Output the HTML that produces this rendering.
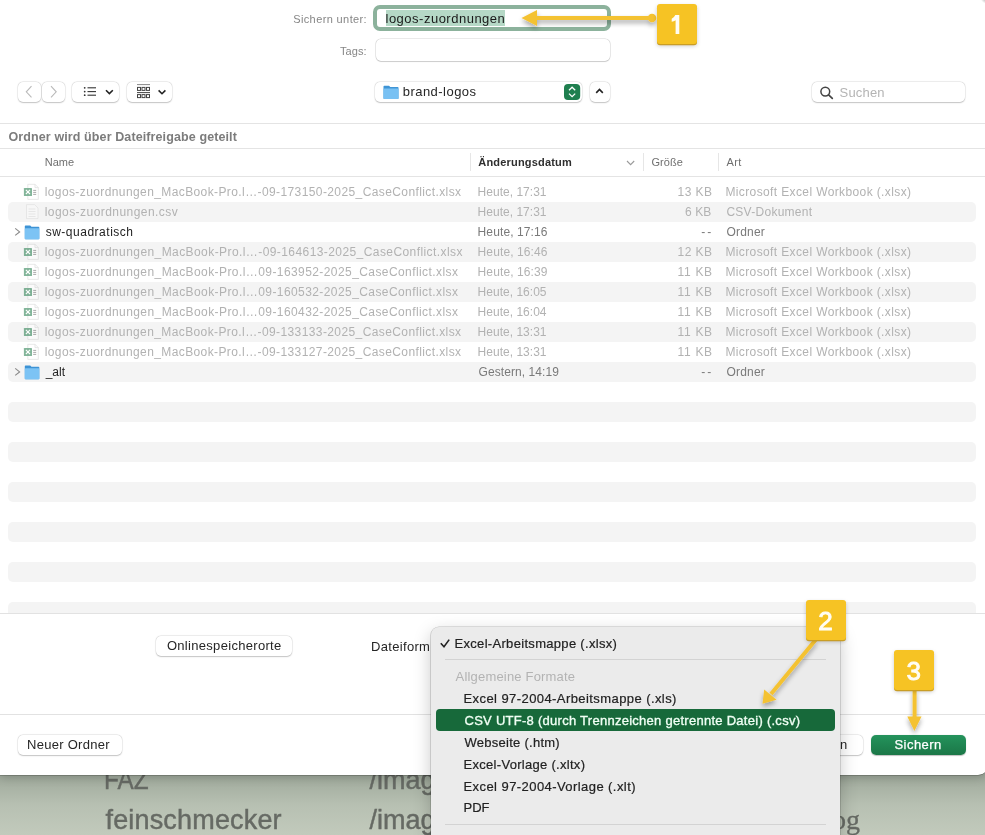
<!DOCTYPE html>
<html><head><meta charset="utf-8"><title>Sichern</title><style>
html,body{margin:0;padding:0;}
body{width:985px;height:835px;position:relative;overflow:hidden;background:#fff;font-family:"Liberation Sans",sans-serif;}
</style></head><body>
<div style='position:absolute;left:0;top:0;width:985px;height:835px;overflow:hidden;will-change:transform;'>
<div style='position:absolute;left:0px;top:760px;width:985.00px;height:75.00px;background:linear-gradient(#959f93 0px,#a3ad9f 20px,#b7c0b2 45px,#c2cabc 75px);'></div>
<div style='position:absolute;left:104.00px;top:767.00px;font-family:"Liberation Sans",sans-serif;font-size:27px;font-weight:400;line-height:27px;letter-spacing:0.000px;color:#666a64;white-space:nowrap;-webkit-text-stroke:0.45px #666a64;transform:scaleX(0.9);transform-origin:0 0;'>FAZ</div>
<div style='position:absolute;left:105.50px;top:807.00px;font-family:"Liberation Sans",sans-serif;font-size:27px;font-weight:400;line-height:27px;letter-spacing:0.167px;color:#666a64;white-space:nowrap;-webkit-text-stroke:0.45px #666a64;'>feinschmecker</div>
<div style='position:absolute;left:369.60px;top:767.00px;font-family:"Liberation Sans",sans-serif;font-size:27px;font-weight:400;line-height:27px;letter-spacing:0.000px;color:#666a64;white-space:nowrap;-webkit-text-stroke:0.45px #666a64;'>/imag</div>
<div style='position:absolute;left:369.60px;top:807.00px;font-family:"Liberation Sans",sans-serif;font-size:27px;font-weight:400;line-height:27px;letter-spacing:0.000px;color:#666a64;white-space:nowrap;-webkit-text-stroke:0.45px #666a64;'>/imag</div>
<div style='position:absolute;left:832.00px;top:806.00px;font-family:"Liberation Serif",sans-serif;font-size:28px;font-weight:400;line-height:28px;letter-spacing:0.000px;color:#666a64;white-space:nowrap;-webkit-text-stroke:0.3px #666a64;'>og</div>
<div style='position:absolute;left:0px;top:-20px;width:988.00px;height:795.00px;background:#fff;border-radius:0 0 10px 0;box-shadow:0 0.5px 0 rgba(0,0,0,0.35),0 3px 10px rgba(0,0,0,0.18);'></div>
<div style='position:absolute;left:979px;top:-6px;width:12px;height:9px;border-radius:50%;background:radial-gradient(circle at 70% 30%, rgba(120,120,120,0.9), rgba(180,180,180,0) 70%);'></div>
<div style='position:absolute;left:373.2px;top:5px;width:238.20px;height:25.50px;border:4px solid #8cb29c;border-radius:7px;box-sizing:border-box;background:#fff;'></div>
<div style='position:absolute;left:386px;top:10px;width:119.00px;height:15.50px;background:#b5d8c6;'></div>
<div style='position:absolute;left:375.7px;top:39px;width:234.00px;height:21.50px;background:#fff;border-radius:5px;box-shadow:0 0 0 0.6px rgba(0,0,0,0.14),0 0.8px 1px rgba(0,0,0,0.14);'></div>
<div style='position:absolute;left:17.6px;top:81.8px;width:23.40px;height:20.60px;background:#fff;border-radius:5px;box-shadow:0 0 0 0.5px rgba(0,0,0,0.09),0 0.6px 1.4px rgba(0,0,0,0.2);'></div>
<div style='position:absolute;left:42px;top:81.8px;width:22.80px;height:20.60px;background:#fff;border-radius:5px;box-shadow:0 0 0 0.5px rgba(0,0,0,0.09),0 0.6px 1.4px rgba(0,0,0,0.2);'></div>
<div style='position:absolute;left:72.4px;top:81.8px;width:46.40px;height:20.60px;background:#fff;border-radius:5px;box-shadow:0 0 0 0.5px rgba(0,0,0,0.09),0 0.6px 1.4px rgba(0,0,0,0.2);'></div>
<div style='position:absolute;left:126.7px;top:81.8px;width:45.70px;height:20.60px;background:#fff;border-radius:5px;box-shadow:0 0 0 0.5px rgba(0,0,0,0.09),0 0.6px 1.4px rgba(0,0,0,0.2);'></div>
<div style='position:absolute;left:374.7px;top:81.8px;width:206.90px;height:20.60px;background:#fff;border-radius:5px;box-shadow:0 0 0 0.5px rgba(0,0,0,0.09),0 0.6px 1.4px rgba(0,0,0,0.2);'></div>
<div style='position:absolute;left:589.8px;top:81.8px;width:20.60px;height:20.60px;background:#fff;border-radius:5px;box-shadow:0 0 0 0.5px rgba(0,0,0,0.09),0 0.6px 1.4px rgba(0,0,0,0.2);'></div>
<div style='position:absolute;left:812.4px;top:81.8px;width:153.00px;height:20.60px;background:#fff;border-radius:5px;box-shadow:0 0 0 0.5px rgba(0,0,0,0.09),0 0.6px 1.4px rgba(0,0,0,0.2);'></div>
<div style='position:absolute;left:0px;top:123.0px;width:985.00px;height:1.00px;background:#e4e4e4;'></div>
<div style='position:absolute;left:0px;top:148.0px;width:985.00px;height:1.00px;background:#e4e4e4;'></div>
<div style='position:absolute;left:0px;top:176.0px;width:985.00px;height:1.00px;background:#e4e4e4;'></div>
<div style='position:absolute;left:470px;top:153px;width:1.00px;height:18.30px;background:#e6e6e6;'></div>
<div style='position:absolute;left:643px;top:153px;width:1.00px;height:18.30px;background:#e6e6e6;'></div>
<div style='position:absolute;left:718px;top:153px;width:1.00px;height:18.30px;background:#e6e6e6;'></div>
<div style='position:absolute;left:8px;top:202px;width:968.00px;height:20.00px;background:#f4f4f4;border-radius:5px;'></div>
<div style='position:absolute;left:8px;top:242px;width:968.00px;height:20.00px;background:#f4f4f4;border-radius:5px;'></div>
<div style='position:absolute;left:8px;top:282px;width:968.00px;height:20.00px;background:#f4f4f4;border-radius:5px;'></div>
<div style='position:absolute;left:8px;top:322px;width:968.00px;height:20.00px;background:#f4f4f4;border-radius:5px;'></div>
<div style='position:absolute;left:8px;top:362px;width:968.00px;height:20.00px;background:#f4f4f4;border-radius:5px;'></div>
<div style='position:absolute;left:8px;top:402px;width:968.00px;height:20.00px;background:#f4f4f4;border-radius:5px;'></div>
<div style='position:absolute;left:8px;top:442px;width:968.00px;height:20.00px;background:#f4f4f4;border-radius:5px;'></div>
<div style='position:absolute;left:8px;top:482px;width:968.00px;height:20.00px;background:#f4f4f4;border-radius:5px;'></div>
<div style='position:absolute;left:8px;top:522px;width:968.00px;height:20.00px;background:#f4f4f4;border-radius:5px;'></div>
<div style='position:absolute;left:8px;top:562px;width:968.00px;height:20.00px;background:#f4f4f4;border-radius:5px;'></div>
<div style='position:absolute;left:8px;top:602px;width:968.00px;height:11.00px;background:#f4f4f4;border-radius:5px;border-bottom-left-radius:0;border-bottom-right-radius:0;'></div>
<div style='position:absolute;left:0px;top:613px;width:985.00px;height:1.00px;background:#e2e2e2;'></div>
<div style='position:absolute;left:0px;top:714px;width:985.00px;height:1.00px;background:#e2e2e2;'></div>
<div style='position:absolute;left:155.6px;top:635.9px;width:136.90px;height:20.10px;background:#fff;border-radius:5px;box-shadow:0 0 0 0.5px rgba(0,0,0,0.09),0 0.6px 1.4px rgba(0,0,0,0.2);'></div>
<div style='position:absolute;left:18px;top:734.9px;width:103.50px;height:20.30px;background:#fff;border-radius:5px;box-shadow:0 0 0 0.5px rgba(0,0,0,0.09),0 0.6px 1.4px rgba(0,0,0,0.2);'></div>
<div style='position:absolute;left:780px;top:734.8px;width:83.10px;height:20.50px;background:#fff;border-radius:5px;box-shadow:0 0 0 0.5px rgba(0,0,0,0.09),0 0.6px 1.4px rgba(0,0,0,0.2);'></div>
<div style='position:absolute;left:871.2px;top:734.8px;width:94.60px;height:19.80px;background:linear-gradient(#24935c,#1b7747);border-radius:5px;box-shadow:0 0.5px 1px rgba(0,0,0,0.25);'></div>
<svg style='position:absolute;left:0;top:0' width='985' height='835'>
 <path d='M31.5 86.2 L26.3 91.8 L31.5 97.4' fill='none' stroke='#b9b9b9' stroke-width='1.1'/>
 <path d='M51 86.2 L56.2 91.8 L51 97.4' fill='none' stroke='#b9b9b9' stroke-width='1.1'/>
 <g fill='#333'><circle cx='84.7' cy='87.8' r='0.9'/><circle cx='84.7' cy='91.6' r='0.9'/><circle cx='84.7' cy='95.2' r='0.9'/></g>
 <g stroke='#333' stroke-width='1.1'><line x1='87.5' y1='87.8' x2='96' y2='87.8'/><line x1='87.5' y1='91.6' x2='96' y2='91.6'/><line x1='87.5' y1='95.2' x2='96' y2='95.2'/></g>
 <path d='M106 90.3 L109.4 93.6 L112.8 90.3' fill='none' stroke='#222' stroke-width='1.6'/>
 <g stroke='#444' stroke-width='1'>
  <line x1='137' y1='84.6' x2='150' y2='84.6' stroke='#888'/>
  <line x1='137' y1='92.6' x2='150' y2='92.6'/>
  <rect x='137.5' y='87.4' width='3' height='3' fill='none'/><rect x='142' y='87.4' width='3' height='3' fill='none'/><rect x='146.5' y='87.4' width='3' height='3' fill='none'/>
  <rect x='137.5' y='94.6' width='3' height='3' fill='none'/><rect x='142' y='94.6' width='3' height='3' fill='none'/><rect x='146.5' y='94.6' width='3' height='3' fill='none'/>
 </g>
 <path d='M158.6 90.4 L162 93.7 L165.4 90.4' fill='none' stroke='#222' stroke-width='1.6'/>
 <path d='M383.5 86.5 Q383.5 85.7 384.3 85.7 L389 85.7 L390.3 87 L397.7 87 Q398.5 87 398.5 87.8 L398.5 98.3 Q398.5 99.1 397.7 99.1 L384.3 99.1 Q383.5 99.1 383.5 98.3 Z' fill='#3f95d6'/>
 <rect x='383.5' y='88.4' width='15' height='10.7' rx='0.8' fill='#79c1f3'/>
 <rect x='564' y='83.9' width='16.2' height='16.1' rx='4' fill='#1f7f4f'/>
 <path d='M569 90.3 L572.1 87.2 L575.2 90.3 M569 93.6 L572.1 96.7 L575.2 93.6' fill='none' stroke='#fff' stroke-width='1.3'/>
 <path d='M596.2 92.9 L599.5 89.5 L602.8 92.9' fill='none' stroke='#222' stroke-width='1.6'/>
 <circle cx='825.3' cy='91.6' r='4.4' fill='none' stroke='#444' stroke-width='1.5'/>
 <line x1='828.6' y1='94.9' x2='832.3' y2='98.4' stroke='#444' stroke-width='1.7' stroke-linecap='round'/>
</svg>
<svg style='position:absolute;left:0;top:0' width='985' height='835'><path d='M627 161 L630.6 164.6 L634.2 161' fill='none' stroke='#9a9a9a' stroke-width='1.1'/></svg>
<svg style='position:absolute;left:0;top:0' width='985' height='835'><g transform='translate(0,0)' opacity='0.55'>
 <path d='M27.8 184.3 L35 184.3 L38.3 187.6 L38.3 199.4 L27.8 199.4 Z' fill='#fff' stroke='#bbb' stroke-width='0.6'/>
 <path d='M35 184.3 L35 187.6 L38.3 187.6' fill='none' stroke='#bbb' stroke-width='0.6'/>
 <g stroke='#555' stroke-width='0.9'><line x1='33.2' y1='190.4' x2='36.2' y2='190.4'/><line x1='33.2' y1='192.4' x2='36.2' y2='192.4'/><line x1='33.2' y1='194.4' x2='36.2' y2='194.4'/></g>
 <rect x='23.9' y='187.9' width='8.1' height='8.1' rx='0.6' fill='#1f7a48'/>
 <path d='M25.9 189.9 L30 194 M30 189.9 L25.9 194' stroke='#fff' stroke-width='1.1'/>
</g><g transform='translate(0,20)' opacity='0.32'>
 <path d='M26.5 184.6 L34.6 184.6 L38 188 L38 198.6 L26.5 198.6 Z' fill='#fff' stroke='#aaa' stroke-width='0.6'/>
 <g stroke='#bbb' stroke-width='0.8'><line x1='28.5' y1='189' x2='35.5' y2='189'/><line x1='28.5' y1='191.5' x2='35.5' y2='191.5'/><line x1='28.5' y1='194' x2='35.5' y2='194'/><line x1='28.5' y1='196.5' x2='35.5' y2='196.5'/></g>
</g><g transform='translate(0,40)'>
 <path d='M15.2 188.4 L19.6 191.9 L15.2 195.4' fill='none' stroke='#8a8a8a' stroke-width='1.15'/>
 <path d='M24.8 186.3 Q24.8 185.5 25.6 185.5 L30.2 185.5 L31.5 186.8 L38.5 186.8 Q39.3 186.8 39.3 187.6 L39.3 198.4 Q39.3 199.2 38.5 199.2 L25.6 199.2 Q24.8 199.2 24.8 198.4 Z' fill='#3d93d5'/>
 <rect x='24.8' y='188.2' width='14.5' height='11' rx='0.8' fill='#7cc3f4'/>
</g><g transform='translate(0,60)' opacity='0.55'>
 <path d='M27.8 184.3 L35 184.3 L38.3 187.6 L38.3 199.4 L27.8 199.4 Z' fill='#fff' stroke='#bbb' stroke-width='0.6'/>
 <path d='M35 184.3 L35 187.6 L38.3 187.6' fill='none' stroke='#bbb' stroke-width='0.6'/>
 <g stroke='#555' stroke-width='0.9'><line x1='33.2' y1='190.4' x2='36.2' y2='190.4'/><line x1='33.2' y1='192.4' x2='36.2' y2='192.4'/><line x1='33.2' y1='194.4' x2='36.2' y2='194.4'/></g>
 <rect x='23.9' y='187.9' width='8.1' height='8.1' rx='0.6' fill='#1f7a48'/>
 <path d='M25.9 189.9 L30 194 M30 189.9 L25.9 194' stroke='#fff' stroke-width='1.1'/>
</g><g transform='translate(0,80)' opacity='0.55'>
 <path d='M27.8 184.3 L35 184.3 L38.3 187.6 L38.3 199.4 L27.8 199.4 Z' fill='#fff' stroke='#bbb' stroke-width='0.6'/>
 <path d='M35 184.3 L35 187.6 L38.3 187.6' fill='none' stroke='#bbb' stroke-width='0.6'/>
 <g stroke='#555' stroke-width='0.9'><line x1='33.2' y1='190.4' x2='36.2' y2='190.4'/><line x1='33.2' y1='192.4' x2='36.2' y2='192.4'/><line x1='33.2' y1='194.4' x2='36.2' y2='194.4'/></g>
 <rect x='23.9' y='187.9' width='8.1' height='8.1' rx='0.6' fill='#1f7a48'/>
 <path d='M25.9 189.9 L30 194 M30 189.9 L25.9 194' stroke='#fff' stroke-width='1.1'/>
</g><g transform='translate(0,100)' opacity='0.55'>
 <path d='M27.8 184.3 L35 184.3 L38.3 187.6 L38.3 199.4 L27.8 199.4 Z' fill='#fff' stroke='#bbb' stroke-width='0.6'/>
 <path d='M35 184.3 L35 187.6 L38.3 187.6' fill='none' stroke='#bbb' stroke-width='0.6'/>
 <g stroke='#555' stroke-width='0.9'><line x1='33.2' y1='190.4' x2='36.2' y2='190.4'/><line x1='33.2' y1='192.4' x2='36.2' y2='192.4'/><line x1='33.2' y1='194.4' x2='36.2' y2='194.4'/></g>
 <rect x='23.9' y='187.9' width='8.1' height='8.1' rx='0.6' fill='#1f7a48'/>
 <path d='M25.9 189.9 L30 194 M30 189.9 L25.9 194' stroke='#fff' stroke-width='1.1'/>
</g><g transform='translate(0,120)' opacity='0.55'>
 <path d='M27.8 184.3 L35 184.3 L38.3 187.6 L38.3 199.4 L27.8 199.4 Z' fill='#fff' stroke='#bbb' stroke-width='0.6'/>
 <path d='M35 184.3 L35 187.6 L38.3 187.6' fill='none' stroke='#bbb' stroke-width='0.6'/>
 <g stroke='#555' stroke-width='0.9'><line x1='33.2' y1='190.4' x2='36.2' y2='190.4'/><line x1='33.2' y1='192.4' x2='36.2' y2='192.4'/><line x1='33.2' y1='194.4' x2='36.2' y2='194.4'/></g>
 <rect x='23.9' y='187.9' width='8.1' height='8.1' rx='0.6' fill='#1f7a48'/>
 <path d='M25.9 189.9 L30 194 M30 189.9 L25.9 194' stroke='#fff' stroke-width='1.1'/>
</g><g transform='translate(0,140)' opacity='0.55'>
 <path d='M27.8 184.3 L35 184.3 L38.3 187.6 L38.3 199.4 L27.8 199.4 Z' fill='#fff' stroke='#bbb' stroke-width='0.6'/>
 <path d='M35 184.3 L35 187.6 L38.3 187.6' fill='none' stroke='#bbb' stroke-width='0.6'/>
 <g stroke='#555' stroke-width='0.9'><line x1='33.2' y1='190.4' x2='36.2' y2='190.4'/><line x1='33.2' y1='192.4' x2='36.2' y2='192.4'/><line x1='33.2' y1='194.4' x2='36.2' y2='194.4'/></g>
 <rect x='23.9' y='187.9' width='8.1' height='8.1' rx='0.6' fill='#1f7a48'/>
 <path d='M25.9 189.9 L30 194 M30 189.9 L25.9 194' stroke='#fff' stroke-width='1.1'/>
</g><g transform='translate(0,160)' opacity='0.55'>
 <path d='M27.8 184.3 L35 184.3 L38.3 187.6 L38.3 199.4 L27.8 199.4 Z' fill='#fff' stroke='#bbb' stroke-width='0.6'/>
 <path d='M35 184.3 L35 187.6 L38.3 187.6' fill='none' stroke='#bbb' stroke-width='0.6'/>
 <g stroke='#555' stroke-width='0.9'><line x1='33.2' y1='190.4' x2='36.2' y2='190.4'/><line x1='33.2' y1='192.4' x2='36.2' y2='192.4'/><line x1='33.2' y1='194.4' x2='36.2' y2='194.4'/></g>
 <rect x='23.9' y='187.9' width='8.1' height='8.1' rx='0.6' fill='#1f7a48'/>
 <path d='M25.9 189.9 L30 194 M30 189.9 L25.9 194' stroke='#fff' stroke-width='1.1'/>
</g><g transform='translate(0,180)'>
 <path d='M15.2 188.4 L19.6 191.9 L15.2 195.4' fill='none' stroke='#8a8a8a' stroke-width='1.15'/>
 <path d='M24.8 186.3 Q24.8 185.5 25.6 185.5 L30.2 185.5 L31.5 186.8 L38.5 186.8 Q39.3 186.8 39.3 187.6 L39.3 198.4 Q39.3 199.2 38.5 199.2 L25.6 199.2 Q24.8 199.2 24.8 198.4 Z' fill='#3d93d5'/>
 <rect x='24.8' y='188.2' width='14.5' height='11' rx='0.8' fill='#7cc3f4'/>
</g></svg>
<div style='position:absolute;left:293.20px;top:14.00px;font-family:"Liberation Sans",sans-serif;font-size:11px;font-weight:400;line-height:11px;letter-spacing:0.385px;color:#868686;white-space:nowrap;'>Sichern unter:</div>
<div style='position:absolute;left:385.50px;top:12.00px;font-family:"Liberation Sans",sans-serif;font-size:13px;font-weight:400;line-height:13px;letter-spacing:0.500px;color:#1a1a1a;white-space:nowrap;'>logos-zuordnungen</div>
<div style='position:absolute;left:339.90px;top:46.00px;font-family:"Liberation Sans",sans-serif;font-size:11px;font-weight:400;line-height:11px;letter-spacing:0.100px;color:#868686;white-space:nowrap;'>Tags:</div>
<div style='position:absolute;left:402.70px;top:85.00px;font-family:"Liberation Sans",sans-serif;font-size:13px;font-weight:400;line-height:13px;letter-spacing:0.470px;color:#262626;white-space:nowrap;'>brand-logos</div>
<div style='position:absolute;left:839.60px;top:86.00px;font-family:"Liberation Sans",sans-serif;font-size:13px;font-weight:400;line-height:13px;letter-spacing:0.180px;color:#b4b4b4;white-space:nowrap;'>Suchen</div>
<div style='position:absolute;left:8.50px;top:131.00px;font-family:"Liberation Sans",sans-serif;font-size:12.5px;font-weight:700;line-height:12.5px;letter-spacing:0.108px;color:#7c7c7c;white-space:nowrap;'>Ordner wird über Dateifreigabe geteilt</div>
<div style='position:absolute;left:44.70px;top:157.00px;font-family:"Liberation Sans",sans-serif;font-size:11px;font-weight:400;line-height:11px;letter-spacing:0.000px;color:#6f6f6f;white-space:nowrap;'>Name</div>
<div style='position:absolute;left:478.30px;top:157.00px;font-family:"Liberation Sans",sans-serif;font-size:11px;font-weight:700;line-height:11px;letter-spacing:0.185px;color:#2e2e2e;white-space:nowrap;'>Änderungsdatum</div>
<div style='position:absolute;left:651.40px;top:157.00px;font-family:"Liberation Sans",sans-serif;font-size:11px;font-weight:400;line-height:11px;letter-spacing:0.050px;color:#6f6f6f;white-space:nowrap;'>Größe</div>
<div style='position:absolute;left:726.40px;top:157.00px;font-family:"Liberation Sans",sans-serif;font-size:11px;font-weight:400;line-height:11px;letter-spacing:0.400px;color:#6f6f6f;white-space:nowrap;'>Art</div>
<div style='position:absolute;left:44.70px;top:186.00px;font-family:"Liberation Sans",sans-serif;font-size:12px;font-weight:400;line-height:12px;letter-spacing:0.398px;color:#b2b2b2;white-space:nowrap;'>logos-zuordnungen_MacBook-Pro.l…-09-173150-2025_CaseConflict.xlsx</div>
<div style='position:absolute;left:477.60px;top:186.00px;font-family:"Liberation Sans",sans-serif;font-size:12px;font-weight:400;line-height:12px;letter-spacing:0.018px;color:#b2b2b2;white-space:nowrap;'>Heute, 17:31</div>
<div style='position:absolute;left:677.60px;top:186.00px;font-family:"Liberation Sans",sans-serif;font-size:12px;font-weight:400;line-height:12px;letter-spacing:0.425px;color:#b2b2b2;white-space:nowrap;'>13 KB</div>
<div style='position:absolute;left:725.40px;top:186.00px;font-family:"Liberation Sans",sans-serif;font-size:12px;font-weight:400;line-height:12px;letter-spacing:0.381px;color:#b2b2b2;white-space:nowrap;'>Microsoft Excel Workbook (.xlsx)</div>
<div style='position:absolute;left:44.70px;top:206.00px;font-family:"Liberation Sans",sans-serif;font-size:12px;font-weight:400;line-height:12px;letter-spacing:0.450px;color:#b2b2b2;white-space:nowrap;'>logos-zuordnungen.csv</div>
<div style='position:absolute;left:477.60px;top:206.00px;font-family:"Liberation Sans",sans-serif;font-size:12px;font-weight:400;line-height:12px;letter-spacing:0.018px;color:#b2b2b2;white-space:nowrap;'>Heute, 17:31</div>
<div style='position:absolute;left:684.90px;top:206.00px;font-family:"Liberation Sans",sans-serif;font-size:12px;font-weight:400;line-height:12px;letter-spacing:0.133px;color:#b2b2b2;white-space:nowrap;'>6 KB</div>
<div style='position:absolute;left:726.40px;top:206.00px;font-family:"Liberation Sans",sans-serif;font-size:12px;font-weight:400;line-height:12px;letter-spacing:0.273px;color:#b2b2b2;white-space:nowrap;'>CSV-Dokument</div>
<div style='position:absolute;left:45.70px;top:226.00px;font-family:"Liberation Sans",sans-serif;font-size:12px;font-weight:400;line-height:12px;letter-spacing:0.508px;color:#232323;white-space:nowrap;'>sw-quadratisch</div>
<div style='position:absolute;left:477.60px;top:226.00px;font-family:"Liberation Sans",sans-serif;font-size:12px;font-weight:400;line-height:12px;letter-spacing:0.109px;color:#7a7a7a;white-space:nowrap;'>Heute, 17:16</div>
<div style='position:absolute;left:701.30px;top:226.00px;font-family:"Liberation Sans",sans-serif;font-size:12px;font-weight:400;line-height:12px;letter-spacing:2.000px;color:#7a7a7a;white-space:nowrap;'>--</div>
<div style='position:absolute;left:726.40px;top:226.00px;font-family:"Liberation Sans",sans-serif;font-size:12px;font-weight:400;line-height:12px;letter-spacing:0.220px;color:#7a7a7a;white-space:nowrap;'>Ordner</div>
<div style='position:absolute;left:44.70px;top:246.00px;font-family:"Liberation Sans",sans-serif;font-size:12px;font-weight:400;line-height:12px;letter-spacing:0.420px;color:#b2b2b2;white-space:nowrap;'>logos-zuordnungen_MacBook-Pro.l…-09-164613-2025_CaseConflict.xlsx</div>
<div style='position:absolute;left:477.60px;top:246.00px;font-family:"Liberation Sans",sans-serif;font-size:12px;font-weight:400;line-height:12px;letter-spacing:0.109px;color:#b2b2b2;white-space:nowrap;'>Heute, 16:46</div>
<div style='position:absolute;left:677.60px;top:246.00px;font-family:"Liberation Sans",sans-serif;font-size:12px;font-weight:400;line-height:12px;letter-spacing:0.425px;color:#b2b2b2;white-space:nowrap;'>12 KB</div>
<div style='position:absolute;left:725.40px;top:246.00px;font-family:"Liberation Sans",sans-serif;font-size:12px;font-weight:400;line-height:12px;letter-spacing:0.381px;color:#b2b2b2;white-space:nowrap;'>Microsoft Excel Workbook (.xlsx)</div>
<div style='position:absolute;left:44.70px;top:266.00px;font-family:"Liberation Sans",sans-serif;font-size:12px;font-weight:400;line-height:12px;letter-spacing:0.419px;color:#b2b2b2;white-space:nowrap;'>logos-zuordnungen_MacBook-Pro.l…09-163952-2025_CaseConflict.xlsx</div>
<div style='position:absolute;left:477.60px;top:266.00px;font-family:"Liberation Sans",sans-serif;font-size:12px;font-weight:400;line-height:12px;letter-spacing:0.109px;color:#b2b2b2;white-space:nowrap;'>Heute, 16:39</div>
<div style='position:absolute;left:677.60px;top:266.00px;font-family:"Liberation Sans",sans-serif;font-size:12px;font-weight:400;line-height:12px;letter-spacing:0.675px;color:#b2b2b2;white-space:nowrap;'>11 KB</div>
<div style='position:absolute;left:725.40px;top:266.00px;font-family:"Liberation Sans",sans-serif;font-size:12px;font-weight:400;line-height:12px;letter-spacing:0.381px;color:#b2b2b2;white-space:nowrap;'>Microsoft Excel Workbook (.xlsx)</div>
<div style='position:absolute;left:44.70px;top:286.00px;font-family:"Liberation Sans",sans-serif;font-size:12px;font-weight:400;line-height:12px;letter-spacing:0.419px;color:#b2b2b2;white-space:nowrap;'>logos-zuordnungen_MacBook-Pro.l…09-160532-2025_CaseConflict.xlsx</div>
<div style='position:absolute;left:477.60px;top:286.00px;font-family:"Liberation Sans",sans-serif;font-size:12px;font-weight:400;line-height:12px;letter-spacing:0.018px;color:#b2b2b2;white-space:nowrap;'>Heute, 16:05</div>
<div style='position:absolute;left:677.60px;top:286.00px;font-family:"Liberation Sans",sans-serif;font-size:12px;font-weight:400;line-height:12px;letter-spacing:0.675px;color:#b2b2b2;white-space:nowrap;'>11 KB</div>
<div style='position:absolute;left:725.40px;top:286.00px;font-family:"Liberation Sans",sans-serif;font-size:12px;font-weight:400;line-height:12px;letter-spacing:0.381px;color:#b2b2b2;white-space:nowrap;'>Microsoft Excel Workbook (.xlsx)</div>
<div style='position:absolute;left:44.70px;top:306.00px;font-family:"Liberation Sans",sans-serif;font-size:12px;font-weight:400;line-height:12px;letter-spacing:0.419px;color:#b2b2b2;white-space:nowrap;'>logos-zuordnungen_MacBook-Pro.l…09-160432-2025_CaseConflict.xlsx</div>
<div style='position:absolute;left:477.60px;top:306.00px;font-family:"Liberation Sans",sans-serif;font-size:12px;font-weight:400;line-height:12px;letter-spacing:0.018px;color:#b2b2b2;white-space:nowrap;'>Heute, 16:04</div>
<div style='position:absolute;left:677.60px;top:306.00px;font-family:"Liberation Sans",sans-serif;font-size:12px;font-weight:400;line-height:12px;letter-spacing:0.675px;color:#b2b2b2;white-space:nowrap;'>11 KB</div>
<div style='position:absolute;left:725.40px;top:306.00px;font-family:"Liberation Sans",sans-serif;font-size:12px;font-weight:400;line-height:12px;letter-spacing:0.381px;color:#b2b2b2;white-space:nowrap;'>Microsoft Excel Workbook (.xlsx)</div>
<div style='position:absolute;left:44.70px;top:326.00px;font-family:"Liberation Sans",sans-serif;font-size:12px;font-weight:400;line-height:12px;letter-spacing:0.398px;color:#b2b2b2;white-space:nowrap;'>logos-zuordnungen_MacBook-Pro.l…-09-133133-2025_CaseConflict.xlsx</div>
<div style='position:absolute;left:477.60px;top:326.00px;font-family:"Liberation Sans",sans-serif;font-size:12px;font-weight:400;line-height:12px;letter-spacing:0.018px;color:#b2b2b2;white-space:nowrap;'>Heute, 13:31</div>
<div style='position:absolute;left:677.60px;top:326.00px;font-family:"Liberation Sans",sans-serif;font-size:12px;font-weight:400;line-height:12px;letter-spacing:0.675px;color:#b2b2b2;white-space:nowrap;'>11 KB</div>
<div style='position:absolute;left:725.40px;top:326.00px;font-family:"Liberation Sans",sans-serif;font-size:12px;font-weight:400;line-height:12px;letter-spacing:0.381px;color:#b2b2b2;white-space:nowrap;'>Microsoft Excel Workbook (.xlsx)</div>
<div style='position:absolute;left:44.70px;top:346.00px;font-family:"Liberation Sans",sans-serif;font-size:12px;font-weight:400;line-height:12px;letter-spacing:0.398px;color:#b2b2b2;white-space:nowrap;'>logos-zuordnungen_MacBook-Pro.l…-09-133127-2025_CaseConflict.xlsx</div>
<div style='position:absolute;left:477.60px;top:346.00px;font-family:"Liberation Sans",sans-serif;font-size:12px;font-weight:400;line-height:12px;letter-spacing:0.018px;color:#b2b2b2;white-space:nowrap;'>Heute, 13:31</div>
<div style='position:absolute;left:677.60px;top:346.00px;font-family:"Liberation Sans",sans-serif;font-size:12px;font-weight:400;line-height:12px;letter-spacing:0.675px;color:#b2b2b2;white-space:nowrap;'>11 KB</div>
<div style='position:absolute;left:725.40px;top:346.00px;font-family:"Liberation Sans",sans-serif;font-size:12px;font-weight:400;line-height:12px;letter-spacing:0.381px;color:#b2b2b2;white-space:nowrap;'>Microsoft Excel Workbook (.xlsx)</div>
<div style='position:absolute;left:45.70px;top:366.00px;font-family:"Liberation Sans",sans-serif;font-size:12px;font-weight:400;line-height:12px;letter-spacing:0.000px;color:#232323;white-space:nowrap;'>_alt</div>
<div style='position:absolute;left:478.60px;top:366.00px;font-family:"Liberation Sans",sans-serif;font-size:12px;font-weight:400;line-height:12px;letter-spacing:0.069px;color:#7a7a7a;white-space:nowrap;'>Gestern, 14:19</div>
<div style='position:absolute;left:701.30px;top:366.00px;font-family:"Liberation Sans",sans-serif;font-size:12px;font-weight:400;line-height:12px;letter-spacing:2.000px;color:#7a7a7a;white-space:nowrap;'>--</div>
<div style='position:absolute;left:726.40px;top:366.00px;font-family:"Liberation Sans",sans-serif;font-size:12px;font-weight:400;line-height:12px;letter-spacing:0.220px;color:#7a7a7a;white-space:nowrap;'>Ordner</div>
<div style='position:absolute;left:166.90px;top:639.00px;font-family:"Liberation Sans",sans-serif;font-size:13px;font-weight:400;line-height:13px;letter-spacing:0.306px;color:#262626;white-space:nowrap;'>Onlinespeicherorte</div>
<div style='position:absolute;left:371.10px;top:640.00px;font-family:"Liberation Sans",sans-serif;font-size:13px;font-weight:400;line-height:13px;letter-spacing:0.312px;color:#262626;white-space:nowrap;'>Dateiform</div>
<div style='position:absolute;left:27.00px;top:738.00px;font-family:"Liberation Sans",sans-serif;font-size:13px;font-weight:400;line-height:13px;letter-spacing:0.273px;color:#262626;white-space:nowrap;'>Neuer Ordner</div>
<div style='position:absolute;left:840.00px;top:738.00px;font-family:"Liberation Sans",sans-serif;font-size:13px;font-weight:400;line-height:13px;letter-spacing:0.000px;color:#262626;white-space:nowrap;'>n</div>
<div style='position:absolute;left:894.50px;top:738.00px;font-family:"Liberation Sans",sans-serif;font-size:13px;font-weight:400;line-height:13px;letter-spacing:0.450px;color:#ffffff;white-space:nowrap;-webkit-text-stroke:0.25px #fff;'>Sichern</div>
<div style='position:absolute;left:430.6px;top:626.6px;width:409.80px;height:233.40px;background:#ebebeb;border-radius:8px;box-shadow:0 0 0 0.6px rgba(0,0,0,0.22),0 6px 18px rgba(0,0,0,0.22);'></div>
<div style='position:absolute;left:445.3px;top:659px;width:380.70px;height:1.00px;background:#d3d3d3;'></div>
<div style='position:absolute;left:445.3px;top:824px;width:380.70px;height:1.00px;background:#d3d3d3;'></div>
<div style='position:absolute;left:436.1px;top:709px;width:398.70px;height:21.80px;background:#17693a;border-radius:4px;'></div>
<svg style='position:absolute;left:0;top:0' width='985' height='835'><path d='M440.8 643.2 L444 646.8 L449.2 639.6' fill='none' stroke='#222' stroke-width='1.6'/></svg>
<div style='position:absolute;left:454.50px;top:637.00px;font-family:"Liberation Sans",sans-serif;font-size:13px;font-weight:400;line-height:13px;letter-spacing:0.312px;color:#222;white-space:nowrap;-webkit-text-stroke:0.2px #222;'>Excel-Arbeitsmappe (.xlsx)</div>
<div style='position:absolute;left:455.60px;top:670.00px;font-family:"Liberation Sans",sans-serif;font-size:13px;font-weight:400;line-height:13px;letter-spacing:0.182px;color:#b3b3b3;white-space:nowrap;'>Allgemeine Formate</div>
<div style='position:absolute;left:463.50px;top:692.00px;font-family:"Liberation Sans",sans-serif;font-size:13px;font-weight:400;line-height:13px;letter-spacing:0.422px;color:#222;white-space:nowrap;-webkit-text-stroke:0.2px #222;'>Excel 97-2004-Arbeitsmappe (.xls)</div>
<div style='position:absolute;left:464.50px;top:714.00px;font-family:"Liberation Sans",sans-serif;font-size:13px;font-weight:400;line-height:13px;letter-spacing:0.269px;color:#f0fff4;white-space:nowrap;-webkit-text-stroke:0.35px #f0fff4;'>CSV UTF-8 (durch Trennzeichen getrennte Datei) (.csv)</div>
<div style='position:absolute;left:464.50px;top:736.00px;font-family:"Liberation Sans",sans-serif;font-size:13px;font-weight:400;line-height:13px;letter-spacing:0.264px;color:#222;white-space:nowrap;-webkit-text-stroke:0.2px #222;'>Webseite (.htm)</div>
<div style='position:absolute;left:463.50px;top:758.00px;font-family:"Liberation Sans",sans-serif;font-size:13px;font-weight:400;line-height:13px;letter-spacing:0.295px;color:#222;white-space:nowrap;-webkit-text-stroke:0.2px #222;'>Excel-Vorlage (.xltx)</div>
<div style='position:absolute;left:463.50px;top:780.00px;font-family:"Liberation Sans",sans-serif;font-size:13px;font-weight:400;line-height:13px;letter-spacing:0.430px;color:#222;white-space:nowrap;-webkit-text-stroke:0.2px #222;'>Excel 97-2004-Vorlage (.xlt)</div>
<div style='position:absolute;left:463.50px;top:801.00px;font-family:"Liberation Sans",sans-serif;font-size:13px;font-weight:400;line-height:13px;letter-spacing:0.000px;color:#222;white-space:nowrap;-webkit-text-stroke:0.2px #222;'>PDF</div>
<svg style='position:absolute;left:0;top:0' width='985' height='835'>
 <defs>
  <filter id='sh' x='-50%' y='-50%' width='200%' height='200%'><feGaussianBlur in='SourceAlpha' stdDeviation='2.5'/><feOffset dx='0' dy='3'/><feComponentTransfer><feFuncA type='linear' slope='0.35'/></feComponentTransfer><feMerge><feMergeNode/><feMergeNode in='SourceGraphic'/></feMerge></filter>
 </defs>
 <g filter='url(#sh)'>
  <line x1='536' y1='18' x2='652' y2='18' stroke='#f4c233' stroke-width='4'/>
  <path d='M521.5 18 L537 10 L537 26 Z' fill='#f4c233'/>
  <circle cx='652' cy='18' r='4.3' fill='#f4c233'/>
  <line x1='815.5' y1='640' x2='771' y2='694' stroke='#f4c233' stroke-width='4'/>
  <path d='M762.5 703.7 L764.2 689.5 L776.5 699.8 Z' fill='#f4c233'/>
  <line x1='914.6' y1='690' x2='914.6' y2='717' stroke='#f4c233' stroke-width='4'/>
  <path d='M907.3 716.5 L921.5 716.5 L914.4 731 Z' fill='#f4c233'/>
 </g>
</svg>
<div style='position:absolute;left:657.3px;top:4.2px;width:39.50px;height:40.00px;background:#f6c324;border-radius:3px;box-shadow:0 1.2px 0 #c99d25,0 2px 4px rgba(0,0,0,0.2);'></div>
<div style='position:absolute;left:806.2px;top:600.1px;width:39.50px;height:40.00px;background:#f6c324;border-radius:3px;box-shadow:0 1.2px 0 #c99d25,0 2px 4px rgba(0,0,0,0.2);'></div>
<div style='position:absolute;left:894.4px;top:650.2px;width:39.50px;height:40.00px;background:#f6c324;border-radius:3px;box-shadow:0 1.2px 0 #c99d25,0 2px 4px rgba(0,0,0,0.2);'></div>
<div style='position:absolute;left:818.20px;top:608.00px;font-family:"Liberation Sans",sans-serif;font-size:26px;font-weight:400;line-height:26px;letter-spacing:0.000px;color:#fffdf5;white-space:nowrap;-webkit-text-stroke:0.9px #fffdf5;'>2</div>
<div style='position:absolute;left:906.40px;top:658.00px;font-family:"Liberation Sans",sans-serif;font-size:26px;font-weight:400;line-height:26px;letter-spacing:0.000px;color:#fffdf5;white-space:nowrap;-webkit-text-stroke:0.9px #fffdf5;'>3</div>
<svg style='position:absolute;left:0;top:0' width='985' height='835'><path d='M675.3 14.9 L679.3 14.9 L679.3 34.1 L675.6 34.1 L675.6 20.3 Q673.8 21.3 671.7 21.8 L671.7 18.7 Q674 17.8 675.3 14.9 Z' fill='#fffdf5'/></svg>
</div>
</body></html>
